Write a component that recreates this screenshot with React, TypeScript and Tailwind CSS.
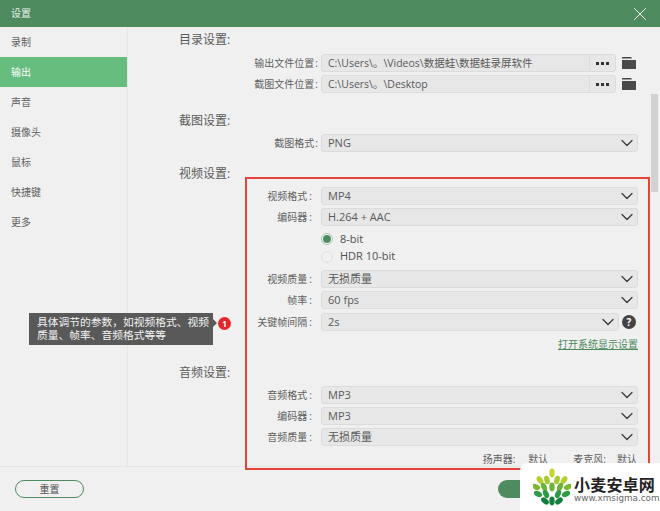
import React from 'react'
import { ChevronDown, X } from 'lucide-react'

const FONT = "font-['Open_Sans','Noto_Sans_CJK_SC',sans-serif]"

const navItems = ['录制', '输出', '声音', '摄像头', '鼠标', '快捷键', '更多']

// leaves of the wheat logo: x, y, rotation, colour
const leaves = [
  [19, 5, 0, '#c5d52e'],
  [7, 12, -35, '#b4cf2e'],
  [14, 12, -15, '#a8c82f'],
  [24, 12, 15, '#a8c82f'],
  [31, 12, 35, '#b4cf2e'],
  [3, 19, -65, '#7cb935'],
  [11, 19, -25, '#6db33a'],
  [19, 19, 0, '#6db33a'],
  [27, 19, 25, '#6db33a'],
  [35, 19, 65, '#7cb935'],
  [5, 26, -65, '#2f9a45'],
  [13, 26, -25, '#2f9a45'],
  [25, 26, 25, '#2f9a45'],
  [33, 26, 65, '#2f9a45'],
  [12, 33, -50, '#147f3d'],
  [19, 33, 0, '#147f3d'],
  [26, 33, 50, '#147f3d'],
] as const

const Label = ({ text, inner }: { text: string; inner?: boolean }) => (
  <div className={`w-[142px] shrink-0 text-right text-[10px] leading-[18px] text-[#5f5f5f] ${inner ? 'pr-[9px]' : 'pr-[3px]'}`}>
    {text}<span className={inner ? 'ml-[2px]' : 'ml-[1px]'}>:</span>
  </div>
)

const Select = ({ label, value, inner, className = '' }: { label: string; value: string; inner?: boolean; className?: string }) => (
  <div className={`flex h-[18px] ${className}`}>
    <Label text={label} inner={inner} />
    <div className="flex w-[317px] items-center justify-between rounded-[3px] border border-[#dcdcdc] bg-[#e7e7e7] pl-[6px] text-[11px] text-[#5a5a5a]">
      <span>{value}</span>
      <ChevronDown size={20} strokeWidth={1.5} className="text-[#3a3a3a]" />
    </div>
  </div>
)

const PathRow = ({ label, value, className = '' }: { label: string; value: string; className?: string }) => (
  <div className={`flex h-[18px] ${className}`}>
    <Label text={label} />
    <div className="flex w-[295px] rounded-[3px] border border-[#dcdcdc] bg-[#e7e7e7] text-[10.5px] text-[#5a5a5a]">
      <span className="flex-1 truncate pl-[6px] leading-[16px]">{value}</span>
      <span className="flex w-[26px] items-center justify-center gap-[2px] border-l border-[#dcdcdc]">
        <i className="h-[3px] w-[3px] bg-[#333]" />
        <i className="h-[3px] w-[3px] bg-[#333]" />
        <i className="h-[3px] w-[3px] bg-[#333]" />
      </span>
    </div>
    <svg width="14" height="12" viewBox="0 0 14 12" className="ml-[6px] mt-[3px]">
      <path d="M0 0h9l1 1.5H0z" fill="#444" />
      <path d="M0 3h14v9H0z" fill="#4a4a4a" />
    </svg>
  </div>
)

const SectionTitle = ({ text, className = '' }: { text: string; className?: string }) => (
  <div className={`h-[18px] text-[12px] leading-[20px] text-[#5a5a5a] ${className}`}>{text}:</div>
)

const App = () => {
  return (
    <div className={`relative flex h-[511px] w-[660px] flex-col overflow-hidden bg-[#f0f0f0] ${FONT}`}>
      <div className="flex h-[27px] shrink-0 items-center justify-between bg-[#4e8c5f] pl-[11px] pr-[9px] text-[10px] text-[#e8f0ea]">
        <span>设置</span>
        <X size={22} strokeWidth={1} className="text-white" />
      </div>

      <div className="flex h-[439px] shrink-0">
        <aside className="w-[128px] shrink-0 border-r border-[#e6e6e6]">
          {navItems.map((item) => (
            <div
              key={item}
              className={`h-[30px] pl-[11px] text-[10px] leading-[30px] ${item === '输出' ? 'bg-[#66bd7e] text-white' : 'text-[#5f5f5f]'}`}
            >
              {item}
            </div>
          ))}
        </aside>

        <main className="h-full flex-1 overflow-hidden pl-[51px] pt-[3px]">
          <SectionTitle text="目录设置" className="mb-[6px]" />
          <PathRow label="输出文件位置" value="C:\Users\。\Videos\数据蛙\数据蛙录屏软件" className="mb-[3px]" />
          <PathRow label="截图文件位置" value="C:\Users\。\Desktop" />

          <SectionTitle text="截图设置" className="mb-[5px] mt-[18px]" />
          <Select label="截图格式" value="PNG" />

          <SectionTitle text="视频设置" className="mb-[5px] mt-[12px]" />
          <Select label="视频格式" value="MP4" inner className="mb-[3px]" />
          <Select label="编码器" value="H.264 + AAC" inner />

          <div className="ml-[142px] mt-[4px] flex h-[18px] items-center text-[11px] text-[#4f4f4f]">
            <span className="mr-[7px] flex h-[12px] w-[12px] items-center justify-center rounded-full border border-[#a9c4b0] bg-white">
              <span className="h-[8px] w-[8px] rounded-full bg-[#4e8c5f]" />
            </span>
            8-bit
          </div>
          <div className="ml-[142px] flex h-[17px] items-center text-[11px] text-[#4f4f4f]">
            <span className="mr-[7px] h-[12px] w-[12px] rounded-full border border-[#e0e0e0] bg-[#f0f0f0]" />
            HDR 10-bit
          </div>

          <Select label="视频质量" value="无损质量" inner className="mb-[3px] mt-[5px]" />
          <Select label="帧率" value="60 fps" inner className="mb-[4px]" />
          <div className="flex h-[18px]">
            <Label text="关键帧间隔" inner />
            <div className="flex w-[298px] items-center justify-between rounded-[3px] border border-[#dcdcdc] bg-[#e7e7e7] pl-[6px] text-[11px] text-[#5a5a5a]">
              <span>2s</span>
              <ChevronDown size={20} strokeWidth={1.5} className="text-[#3a3a3a]" />
            </div>
            <span className="ml-[3px] mt-[2px] flex h-[14px] w-[14px] items-center justify-center rounded-full bg-[#444] text-[10px] font-bold leading-none text-white">
              ?
            </span>
          </div>
          <div className="mt-[4px] h-[18px] w-[459px] text-right text-[10px] leading-[18px] text-[#4e8c5f] underline">
            打开系统显示设置
          </div>

          <SectionTitle text="音频设置" className="mb-[5px] mt-[10px]" />
          <Select label="音频格式" value="MP3" inner className="mb-[3px]" />
          <Select label="编码器" value="MP3" inner className="mb-[3px]" />
          <Select label="音频质量" value="无损质量" inner />
          <div className="mt-[4px] flex h-[18px] w-[459px] justify-end text-[10px] leading-[18px] text-[#5f5f5f]">
            <span>扬声器:</span>
            <span className="ml-[13px]">默认</span>
            <span className="ml-[25px]">麦克风:</span>
            <span className="ml-[11px] mr-[1px]">默认</span>
          </div>
        </main>
      </div>

      <footer className="flex flex-1 items-center gap-[414px] border-t border-[#e6e6e6] pl-[15px] pb-[1px]">
        <button className="h-[18px] w-[69px] rounded-full border border-[#4e8c5f] text-[10px] leading-none text-[#555]">
          重置
        </button>
        <button className="h-[18px] w-[70px] rounded-full bg-[#4e8c5f]" />
      </footer>

      {/* scrollbar */}
      <div className="absolute left-[651px] top-[94px] h-[98px] w-[7px] bg-[#d2d2d2]" />

      {/* red annotation box */}
      <div className="absolute left-[245px] top-[177px] h-[293px] w-[405px] border-2 border-[#e5433a]" />

      {/* annotation tooltip */}
      <div className="absolute left-[29px] top-[313px] h-[32px] w-[184px] whitespace-nowrap bg-[#595959] pl-[8px] pt-[3px] text-[10.75px] leading-[13px] text-[#f2f2f2]">
        具体调节的参数，如视频格式、视频
        <br />
        质量、帧率、音频格式等等
      </div>
      <div className="absolute left-[213px] top-[319px] h-0 w-0 border-y-[4px] border-l-[4px] border-y-transparent border-l-[#595959]" />
      <div className="absolute left-[218px] top-[317px] flex h-[13px] w-[13px] items-center justify-center rounded-full bg-[#e5262c] text-[8px] font-bold leading-none text-white">
        1
      </div>

      {/* site watermark */}
      <div className="absolute left-[520px] top-[463px] flex h-[48px] w-[140px] items-center rounded-tl-[8px] bg-white pl-[13px]">
        <svg width="38" height="38" viewBox="0 0 38 38" className="shrink-0">
          {leaves.map(([x, y, r, c], i) => (
            <ellipse key={i} cx={x} cy={y} rx="2.7" ry="4.4" fill={c} transform={`rotate(${r} ${x} ${y})`} />
          ))}
        </svg>
        <div className="ml-[3px] mt-[14px] flex flex-col self-start">
          <span className="text-[16px] font-bold leading-[16px] tracking-[0.2px] text-[#222]">小麦安卓网</span>
          <span className="whitespace-nowrap font-['DejaVu_Sans',sans-serif] text-[8.8px] leading-[11px] text-[#666]">www.xmsigma.com</span>
        </div>
      </div>
    </div>
  )
}

export default App
